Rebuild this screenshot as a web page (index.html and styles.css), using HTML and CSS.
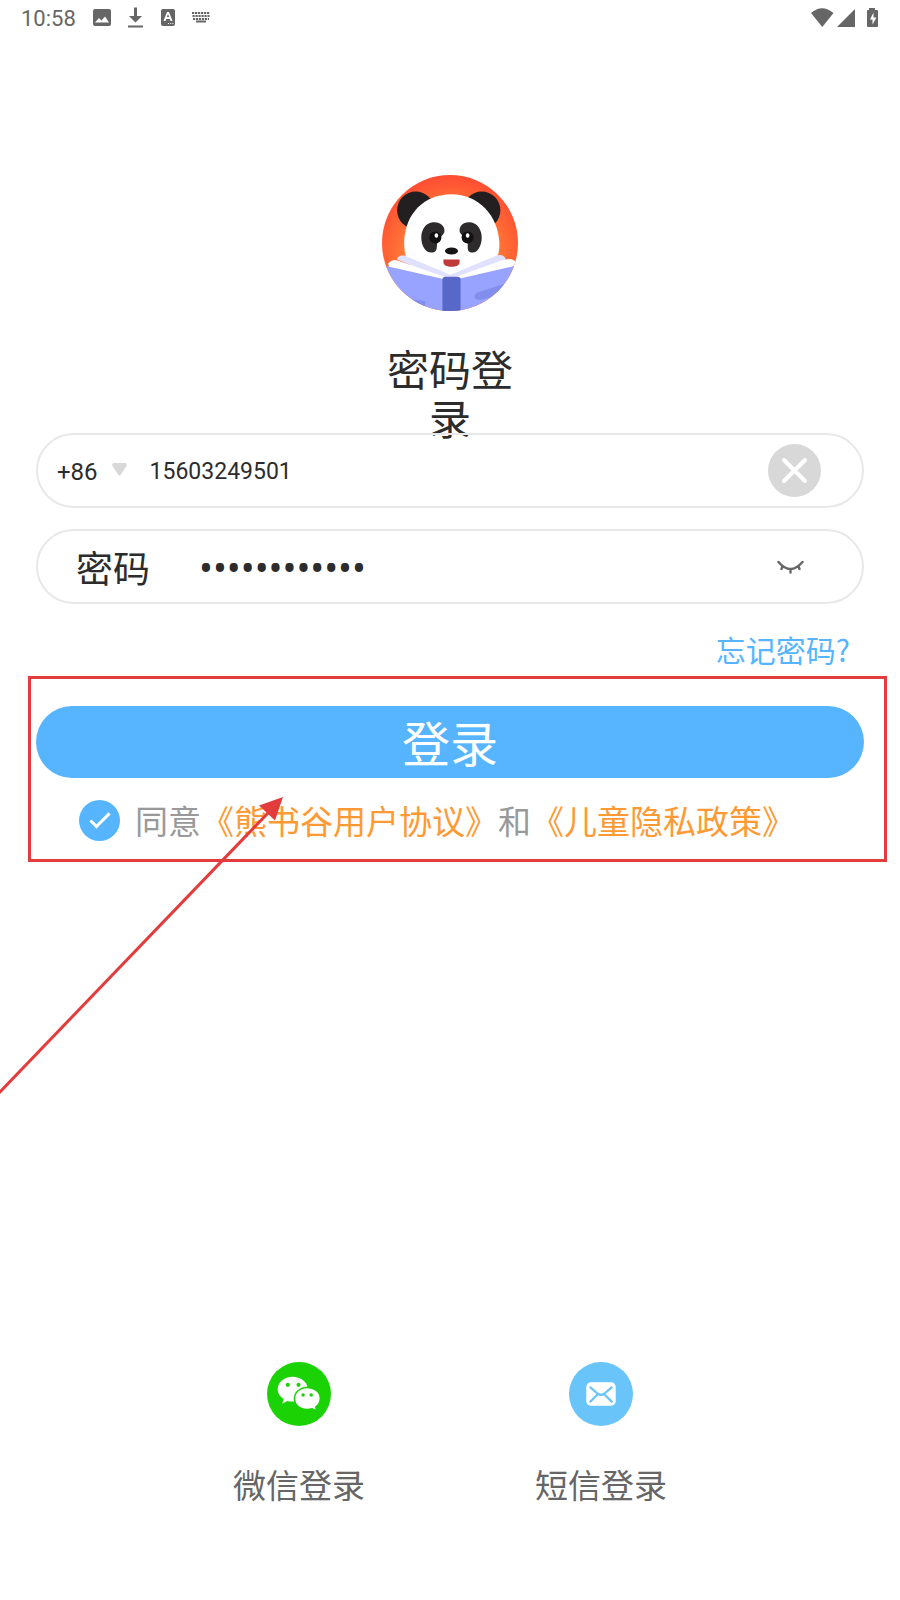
FILE: index.html
```html
<!DOCTYPE html>
<html lang="zh-CN">
<head>
<meta charset="utf-8">
<meta name="viewport" content="width=device-width, initial-scale=1">
<title>密码登录</title>
<link rel="stylesheet" href="styles.css">
</head>
<body>
<header class="status">
  <span class="status-time">10:58</span>
  <svg class="status-left" width="120" height="24" viewBox="0 0 120 24" aria-hidden="true">
    <path fill="#666" fill-rule="evenodd" d="M2 2h14q2 0 2 2v13q0 2-2 2H2q-2 0-2-2V4q0-2 2-2zM2 15.500h14l-4-6-3.500 4-2.500-2.500z"/>
    <path fill="#666" d="M41 .5h3v8.500h5L42.500 15.500 36 9h5zM35 18.500h15v2H35z"/>
    <path fill="#666" fill-rule="evenodd" d="M70 2h10q2 0 2 2v13q0 2-2 2H70q-2 0-2-2V4q0-2 2-2zM74 5l-3.500 9h2l.7-2h3.600l.7 2h2L76 5zM73.800 10l1.200-3 1.200 3zM75 16h1v1h-1zM77.200 16h1v1h-1zM79.400 16h1v1h-1z"/>
    <path stroke="#666" stroke-width="2.200" stroke-dasharray="2.200 .8" d="M99 6h18M99.500 9h17M100 12h16"/>
    <path stroke="#666" stroke-width="2" d="M103 14.500h10"/>
  </svg>
  <svg class="status-right" width="68" height="22" viewBox="0 0 68 22" aria-hidden="true">
    <path fill="#666" d="M0 5q11-9.500 22.500 0L11.250 19z"/>
    <path fill="#666" d="M44 1v18H26z"/>
    <path fill="#666" fill-rule="evenodd" d="M58 0h6v2h2q1 0 1 1v15q0 1-1 1h-9q-1 0-1-1V3q0-1 1-1h1zM62.500 4.500L59 11.500h2.500V16.500l4-7H62.500z"/>
  </svg>
</header>

<main class="login">
  <svg class="logo" viewBox="0 0 135 135" role="img" aria-label="熊书谷">
    <defs>
      <radialGradient id="sun" cx="50%" cy="60%" r="60%"><stop offset=".4" stop-color="#ff8a35"/><stop offset="1" stop-color="#ff4c33"/></radialGradient>
      <clipPath id="disc"><circle cx="67.500" cy="67.500" r="67.500"/></clipPath>
    </defs>
    <g clip-path="url(#disc)">
      <path fill="url(#sun)" d="M0 0h135v135H0z"/>
      <ellipse cx="33.500" cy="35" rx="18.500" ry="18.500" fill="#231e20"/>
      <ellipse cx="99" cy="35" rx="18.500" ry="18.500" fill="#231e20"/>
      <path fill="#fff" d="M22 66C23 38 42 19 69 19s46 21 47.500 48c.5 20-8 34-48 34S22 88 22 66z"/>
      <path fill="#2e2b2d" d="M50 47c-7 1-11 8-11 15 0 8 4 15 10 15 8 0 4-8 7-13 3-4 6-5 6-9 0-5-5-9-12-8zM88 47c7 1 11 8 11 15 0 8-4 15-9 15-8 0-3-8-6-13-3-4-7-5-7-9 0-5 4-9 11-8z"/>
      <circle cx="53" cy="62" r="6" fill="#121112"/><circle cx="85" cy="62" r="6" fill="#121112"/>
      <ellipse cx="54" cy="60" rx="1.800" ry="2.200" fill="#fff"/><ellipse cx="85" cy="60" rx="1.800" ry="2.200" fill="#fff"/>
      <ellipse cx="69" cy="75.500" rx="6.500" ry="3.500" fill="#171415"/>
      <path fill="#c03a3a" d="M61 84h16q1 7-6 7h-4q-7 0-6-7z"/>
      <path fill="#dfe1fe" d="M15 84q1-5 7-4l46 19 46-19q7-2 9 4L68 106z"/>
      <path fill="#fff" d="M6 88q4-5 10-3l52 18 50-18q12-4 15 2l-5 6-60 14L8 94z"/>
      <path fill="#98a2ff" d="M3 90l61 14v34H0zM133 90l-61 14v34h63z"/>
      <path fill="#828eed" d="M14 122l29 3v5H20zM94 117l31-10-10 13-19 4q-5-1-4-5z"/>
      <path fill="#5768c8" d="M60 104q0-3 3-3h12q3 0 3 3v31H60z"/>
    </g>
  </svg>
  <h1 class="title">密码登录</h1>

  <form class="form">
    <div class="field field-phone">
      <button class="code" type="button">+86
        <svg width="15" height="13" viewBox="0 0 15 13" aria-hidden="true"><path fill="#d8d8d8" d="M1.500 0h12q2 1 1 3L8.500 12q-1 1-2 0L.5 3q-1-2 1-3z"/></svg>
      </button>
      <input class="phone" type="tel" aria-label="手机号" value="15603249501">
      <button class="clear" type="button" aria-label="清除">
        <svg width="53" height="53" viewBox="0 0 53 53" aria-hidden="true"><circle cx="26.500" cy="26.500" r="26.500" fill="#d8d8d8"/><path stroke="#fff" stroke-width="4" stroke-linecap="round" d="M16 16l21 21M37 16L16 37"/></svg>
      </button>
    </div>
    <div class="field field-password">
      <label class="label" for="password">密码</label>
      <input class="password" id="password" type="password" value="abcdefghijkl">
      <button class="eye" type="button" aria-label="显示密码">
        <svg width="27" height="14" viewBox="0 0 27 14" aria-hidden="true"><path fill="none" stroke="#666" stroke-width="2.400" stroke-linecap="round" d="M1.500 2q12 14 24 0M5.500 6.500L4.500 9M13.500 9v3.500M21.500 6.500L22.500 9"/></svg>
      </button>
    </div>
    <a class="forgot" href="#forgot">忘记密码?</a>

    <div class="submit-area">
      <button class="submit" type="submit">登录</button>
      <div class="agree">
        <input class="agree-box" id="agree" type="checkbox" checked>
        <span class="agree-text"><label for="agree">同意</label><a href="#terms">《熊书谷用户协议》</a>和<a href="#privacy">《儿童隐私政策》</a></span>
      </div>
      <svg class="arrow" width="284" height="297" viewBox="0 0 284 297" aria-hidden="true"><path stroke="#e33c3c" stroke-width="3" d="M-2 297L268 16"/><path fill="#e33c3c" d="M283 0l-24 8.500 16 15z"/></svg>
    </div>
  </form>

  <nav class="others" aria-label="其他登录方式">
    <a class="other" href="#wechat">
      <svg width="64" height="64" viewBox="0 0 63 63" aria-hidden="true">
        <circle cx="31.500" cy="31.500" r="31.500" fill="#1bd205"/>
        <path fill="#fff" d="M25 14.500c8 0 15 5 15 12s-6 12.500-15 12.500c-2 0-3 0-5-.6L15 41l1.500-4.500C12.500 34 10.500 30.500 10.500 27c0-7 6.500-12.500 14.500-12.500z"/>
        <path fill="#fff" stroke="#1bd205" stroke-width="1.500" d="M39.500 25C46.500 25 52.500 29.500 52.500 36c0 3.500-2 6.500-4.500 8.500l1 4-4.500-2.500c-1.500.5-3 .8-5 .8C32 46.800 27 42 27 36s5.500-11 12.500-11z"/>
        <g fill="#1bd205"><circle cx="20.500" cy="22.500" r="2"/><circle cx="31" cy="22.500" r="2"/><circle cx="35.500" cy="32.500" r="1.700"/><circle cx="43.500" cy="32.500" r="1.700"/></g>
      </svg>
      <span>微信登录</span>
    </a>
    <a class="other" href="#sms">
      <svg width="64" height="64" viewBox="0 0 63 63" aria-hidden="true">
        <circle cx="31.500" cy="31.500" r="31.500" fill="#69c5f9"/>
        <rect x="17" y="20" width="29" height="23" rx="4.500" fill="#fff"/>
        <path fill="none" stroke="#69c5f9" stroke-width="2.200" stroke-linecap="round" d="M21 25l7 6q3.500 2.500 7 0l7-6M21 39l6.500-6.500M42 39l-6.500-6.500"/>
      </svg>
      <span>短信登录</span>
    </a>
  </nav>
</main>
</body>
</html>
```
FILE: styles.css
```css
*,
*::after {
  box-sizing: border-box;
}

body {
  margin: 0;
  min-height: 100vh;
  display: flex;
  flex-direction: column;
  background: #fff;
  color: #2c2c2c;
  font-family: "Noto Sans CJK SC", Roboto, sans-serif;
  overflow-x: hidden;
}

button,
input {
  margin: 0;
  padding: 0;
  border: 0;
  background: none;
  color: inherit;
  font-family: inherit;
  outline: 0;
}

a {
  color: inherit;
  text-decoration: none;
}

svg {
  display: block;
  flex: none;
}

.status {
  display: flex;
  align-items: center;
  height: 37px;
  padding: 0 21px;
  color: #666;
  font-family: Roboto, sans-serif;
  font-size: 22px;
}

.status-left {
  margin-left: 17px;
}

.status-right {
  margin-left: auto;
}

.login {
  flex: 1;
  display: flex;
  flex-direction: column;
  align-items: center;
  padding: 138px 36px 92px;
}

.logo {
  width: 136px;
  height: 136px;
}

.title {
  width: 134px;
  margin: 32px 0 -8px;
  font-size: 42px;
  line-height: 49px;
  font-weight: 400;
  text-align: center;
}

.form {
  position: relative;
  display: flex;
  flex-direction: column;
  width: 100%;
}

.field {
  display: flex;
  align-items: center;
  height: 75px;
  margin-bottom: 21px;
  border: 2px solid #e8e8e8;
  border-radius: 38px;
}

.field-phone {
  padding: 0 41px 0 19px;
}

.field-password {
  padding: 0 58px 0 38px;
}

.code {
  display: flex;
  align-items: center;
  gap: 14px;
  padding-top: 2px;
  font-family: Roboto, sans-serif;
  font-size: 24px;
}

.code svg {
  margin-bottom: 4px;
}

.phone {
  flex: 1;
  min-width: 0;
  margin-left: 23px;
  padding-top: 2px;
  font-family: Roboto, sans-serif;
  font-size: 23px;
}

.label {
  font-size: 37px;
  line-height: 48px;
}

.password {
  flex: 1;
  min-width: 0;
  margin-left: 49px;
  font-family: "Noto Sans", sans-serif;
  font-size: 37px;
}

.forgot {
  align-self: flex-end;
  margin-right: 14px;
  color: #57b5ff;
  font-size: 30px;
  line-height: 48px;
}

.submit-area {
  position: relative;
  margin-top: 33px;
}

.submit-area::after {
  content: "";
  position: absolute;
  inset: -30px -23px -20px -8px;
  border: 3px solid #e33c3c;
  pointer-events: none;
}

.submit {
  display: block;
  width: 100%;
  height: 72px;
  padding-bottom: 2px;
  border-radius: 36px;
  background: #57b5ff;
  color: #fff;
  font-size: 48px;
  line-height: 48px;
}

.agree {
  display: flex;
  align-items: center;
  gap: 15px;
  padding: 21px 0 0 43px;
  color: #999;
  font-size: 33px;
  line-height: 43px;
}

.agree a {
  color: #ff9933;
}

.agree-box {
  appearance: none;
  position: relative;
  flex: none;
  width: 41px;
  height: 41px;
  border-radius: 50%;
  background: #57b5ff;
}

.agree-box:checked::after {
  content: "";
  position: absolute;
  left: 11px;
  top: 13px;
  width: 20px;
  height: 10px;
  border: solid #fff;
  border-width: 0 0 3px 3px;
  transform: rotate(-45deg);
}

.arrow {
  position: absolute;
  left: -36px;
  top: 91px;
  pointer-events: none;
}

.others {
  display: flex;
  justify-content: center;
  gap: 170px;
  margin-top: auto;
}

.other {
  display: flex;
  flex-direction: column;
  align-items: center;
  gap: 34px;
  color: #666;
  font-size: 33px;
  line-height: 48px;
}
```
